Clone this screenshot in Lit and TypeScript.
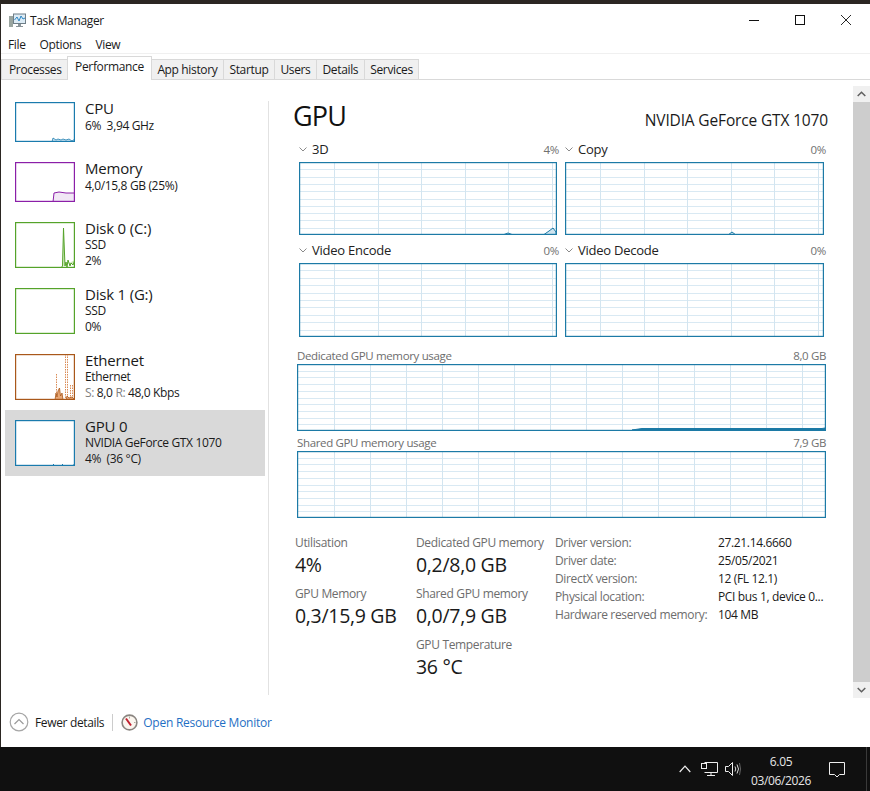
import { LitElement, html, css, svg } from "lit";
import { customElement, property } from "lit/decorators.js";

const FONT = css`"Open Sans", "Noto Sans", "Liberation Sans", sans-serif`;

// small preview in the left list
@customElement("perf-thumb")
class PerfThumb extends LitElement {
  @property() color = "#000";
  @property({ type: Number }) h = 40;
  @property() kind = "";

  static styles = css`
    :host { display: block; flex: none; }
    svg { display: block; }
  `;

  shape() {
    const h = this.h, c = this.color;
    if (this.kind === "cpu")
      return svg`<polygon points="37,${h} 38,${h - 4} 41,${h - 2} 43,${h - 3} 46,${h - 2} 48,${h - 3} 51,${h - 2} 54,${h - 3} 57,${h - 1} 60,${h - 3} 60,${h}" fill="#cfe6f3" stroke=${c} stroke-width=".8"/>`;
    if (this.kind === "mem")
      return svg`<polygon points="38,${h} 39,${h - 9} 44,${h - 10} 51,${h - 9} 60,${h - 9} 60,${h}" fill="#f1e7f5" stroke=${c} stroke-width="1"/>`;
    if (this.kind === "disk")
      return svg`<polyline points="44,${h} 46,${h} 47.5,${h - 2} 48.500,6 50,${h - 2} 51,${h - 6} 52,${h - 1} 53,${h - 8} 55,${h - 2} 56,${h - 5} 58,${h - 3} 60,${h - 8}" fill="#cfe8bd" stroke=${c} stroke-width="1"/>`;
    if (this.kind === "eth")
      return svg`
        <line x1="50.500" y1="0" x2="50.500" y2=${h} stroke="#d98b55" stroke-width="1" stroke-dasharray="1.500 1"/>
        <line x1="52.500" y1="0" x2="52.500" y2=${h} stroke="#d98b55" stroke-width="1" stroke-dasharray="1.500 1"/>
        <line x1="41.500" y1="20" x2="41.500" y2=${h} stroke="#d98b55" stroke-width="1" stroke-dasharray="1.500 1"/>
        <line x1="55.500" y1="31" x2="55.500" y2=${h} stroke="#d98b55" stroke-width="1" stroke-dasharray="1.500 1"/>
        <line x1="57.500" y1="31" x2="57.500" y2=${h} stroke="#d98b55" stroke-width="1" stroke-dasharray="1.500 1"/>
        <polygon points="40,${h} 41,${h - 7} 42,${h - 3} 43,${h - 9} 44.500,${h - 12} 45.500,${h - 4} 47,${h - 7} 48,${h}" fill="#e8a877" stroke=${c} stroke-width=".8"/>
        <polygon points="51,${h} 52,${h - 4} 54,${h - 2} 57,${h - 3} 60,${h}" fill="#e8a877" stroke=${c} stroke-width=".8"/>`;
    if (this.kind === "gpu")
      return svg`
        <rect x="38" y=${h - 2} width="1" height="1" fill=${c}/>
        <rect x="47" y=${h - 2} width="1" height="1" fill=${c}/>
        <polygon points="57,${h} 60,${h - 3} 60,${h}" fill=${c}/>`;
    return null;
  }

  render() {
    const h = this.h;
    return html`<svg width="60" height=${h} viewBox="0 0 60 ${h}">
      <rect width="60" height=${h} fill="#fff"/>
      ${this.shape()}
      <rect x=".6" y=".6" width="58.8" height=${h - 1.2} fill="none" stroke=${this.color} stroke-width="1.2"/>
    </svg>`;
  }
}

// big gpu graph with its grid
@customElement("usage-graph")
class UsageGraph extends LitElement {
  @property({ type: Number }) w = 258;
  @property({ type: Number }) h = 73;
  @property({ type: Number }) step = 43.6;
  @property({ type: Number }) offset = 35;
  @property() fill = "";
  @property() shade = "#cfe4ef";

  static styles = css`
    :host { display: block; }
    svg { display: block; }
  `;

  render() {
    const { w, h, step, offset } = this;
    const vs: number[] = [];
    for (let x = offset; x < w - 2; x += step) vs.push(Math.round(x) + 0.5);
    const hs: number[] = [];
    for (let i = 1; i < 10; i++) hs.push(Math.round((h * i) / 10) + 0.5);
    return html`<svg width=${w} height=${h} viewBox="0 0 ${w} ${h}">
      <rect width=${w} height=${h} fill="#fff"/>
      ${hs.map((y) => svg`<line x1="0" x2=${w} y1=${y} y2=${y} stroke="#d9e9f3"/>`)}
      ${vs.map((x) => svg`<line y1="0" y2=${h} x1=${x} x2=${x} stroke="#d3e5f0"/>`)}
      ${this.fill ? svg`<polygon points=${this.fill} fill=${this.shade} stroke="#1c7aa6" stroke-width="1"/>` : null}
      <rect x=".6" y=".6" width=${w - 1.2} height=${h - 1.2} fill="none" stroke="#1c7aa6" stroke-width="1.2"/>
    </svg>`;
  }
}

const ITEMS = [
  { name: "CPU", lines: [html`6%&nbsp; 3,94 GHz`], color: "#1a7bad", h: 40, kind: "cpu" },
  { name: "Memory", lines: [html`4,0/15,8 GB (25%)`], color: "#8b1fa8", h: 40, kind: "mem" },
  { name: "Disk 0 (C:)", lines: [html`SSD`, html`2%`], color: "#55a32a", h: 46, kind: "disk" },
  { name: "Disk 1 (G:)", lines: [html`SSD`, html`0%`], color: "#55a32a", h: 46, kind: "" },
  {
    name: "Ethernet",
    lines: [html`Ethernet`, html`<span class="dim">S:</span> 8,0 <span class="dim">R:</span> 48,0 Kbps`],
    color: "#a9581a",
    h: 46,
    kind: "eth",
  },
  { name: "GPU 0", lines: [html`NVIDIA GeForce GTX 1070`, html`4%&nbsp; (36 °C)`], color: "#1a7bad", h: 46, kind: "gpu", active: true },
];

const TABS = ["Processes", "Performance", "App history", "Startup", "Users", "Details", "Services"];

const DETAILS = [
  ["Driver version:", "27.21.14.6660"],
  ["Driver date:", "25/05/2021"],
  ["DirectX version:", "12 (FL 12.1)"],
  ["Physical location:", "PCI bus 1, device 0..."],
  ["Hardware reserved memory:", "104 MB"],
];

@customElement("app-root")
export class AppRoot extends LitElement {
  static styles = css`
    :host {
      display: flex;
      flex-direction: column;
      width: 870px;
      height: 791px;
      background: #101010;
      font-family: ${FONT};
      font-size: 12px;
      color: #1a1a1a;
      letter-spacing: -0.35px;
      overflow: hidden;
    }
    .wallpaper { height: 4px; background: #2b2622; flex: none; }
    .window {
      height: 743px;
      flex: none;
      display: flex;
      flex-direction: column;
      background: #fff;
      border-left: 1px solid #2b2622;
    }
    .titlebar { height: 32px; display: flex; align-items: center; flex: none; padding-right: 1px; }
    .app-icon { margin-left: 8px; margin-right: 4px; }
    .winbtn { width: 46px; height: 32px; display: flex; align-items: center; justify-content: center; }
    .spacer { flex: 1; }
    .menu {
      height: 17px;
      flex: none;
      display: flex;
      align-items: center;
      gap: 14px;
      padding-left: 7px;
      border-bottom: 1px solid #f0f0f0;
    }
    .tabs {
      height: 25px;
      flex: none;
      display: flex;
      align-items: flex-end;
      padding-left: 1px;
      border-bottom: 1px solid #d9d9d9;
    }
    .tab {
      height: 20px;
      line-height: 20px;
      padding: 0 5.5px;
      background: #f0f0f0;
      border: 1px solid #d9d9d9;
      border-bottom: 0;
      margin-left: -1px;
      box-sizing: border-box;
    }
    .tab:first-child { padding-left: 7px; }
    .tab.on {
      height: 24px;
      line-height: 20px;
      margin-bottom: -1px;
      background: #fff;
      position: relative;
      padding: 0 7px;
    }
    .content { flex: 1; min-height: 0; display: flex; }
    .side { width: 267px; flex: none; padding: 12px 0 0 4px; box-sizing: border-box; }
    .item { display: flex; gap: 10px; padding: 10px; width: 260px; box-sizing: border-box; }
    .item.on { background: #d9d9d9; }
    .text { margin: -2px 0; height: 0; }
    .item .name { font-size: 15px; line-height: 16px; margin-bottom: 1px; letter-spacing: -0.2px; }
    .item .sub { line-height: 16px; }
    .item .one { margin-top: 2px; }
    .dim { color: #808080; }
    .divider { width: 1px; background: #e2e2e2; margin: 21px 0 7px; flex: none; }
    .main { flex: 1; min-width: 0; padding-left: 24px; }
    .head {
      display: flex;
      align-items: baseline;
      justify-content: space-between;
      height: 40px;
      padding: 20px 25px 0 0;
    }
    h1 { margin: 0; font-size: 27px; font-weight: 400; line-height: 32px; color: #111; letter-spacing: -0.8px; }
    .adapter { font-size: 15.5px; letter-spacing: -0.15px; }
    .graphs {
      display: grid;
      grid-template-columns: 258px 259px;
      column-gap: 8px;
      row-gap: 6px;
      margin-left: 6px;
    }
    .cap { height: 18px; margin-bottom: 4px; display: flex; align-items: center; justify-content: space-between; }
    .cap .title { font-size: 13px; display: flex; align-items: center; gap: 5px; color: #222; letter-spacing: -0.25px; }
    .pct { color: #707070; margin-right: -2px; font-size: 11.5px; }
    .wide { margin: 10px 0 0 4px; width: 529px; }
    .wide + .wide { margin-top: 2px; }
    .wide .cap { height: 17px; margin: 0; color: #6d6d6d; font-size: 11.5px; }
    .wide + .wide .cap { height: 18px; }
    .wide .pct { margin: 0; }
    .stats {
      display: grid;
      grid-template-columns: 121px 139px 1fr;
      margin: 17px 0 0 2px;
    }
    .stat { height: 51px; }
    .stat .label { color: #6d6d6d; line-height: 16px; }
    .stat .value { font-size: 19.5px; line-height: 28px; color: #1a1a1a; letter-spacing: -0.3px; }
    .info { display: grid; grid-template-columns: 163px 1fr; grid-auto-rows: 18px; line-height: 18px; margin-top: -1px; align-content: start; }
    .info .k { color: #6d6d6d; }
    .scroll { width: 17px; flex: none; margin-top: 6px; display: flex; flex-direction: column; height: 612px; }
    .arrow { height: 16px; background: #f0f0f0; display: flex; align-items: center; justify-content: center; flex: none; }
    .thumb { flex: 1; background: #cdcdcd; }
    .footer { height: 45px; flex: none; display: flex; align-items: center; padding: 0 0 5px 8px; box-sizing: border-box; }
    .footer .less { margin-left: 6px; color: #1a1a1a; }
    .sep { width: 1px; height: 17px; background: #ccc; margin: 0 8px; }
    .link { color: #1f6fc4; margin-left: 5px; letter-spacing: -0.25px; }
    .taskbar { height: 44px; flex: none; display: flex; align-items: center; justify-content: flex-end; color: #e6e6e6; }
    .clock { width: 80px; text-align: center; line-height: 19px; padding-top: 3px; }
    .edge { width: 1px; height: 44px; background: #3a3a3a; margin: 0 3px 0 20px; }
  `;

  renderGraph(label: string, pct: string, fill = "", h = 73, w = 258) {
    return html`<div>
      <div class="cap">
        <span class="title">
          <svg width="8" height="5" viewBox="0 0 8 5"><path d="M.5.5 4 4 7.5.5" fill="none" stroke="#8a8a8a"/></svg>
          ${label}
        </span>
        <span class="pct">${pct}</span>
      </div>
      <usage-graph .w=${w} .h=${h} .fill=${fill}></usage-graph>
    </div>`;
  }

  renderStat(label: string, value: string) {
    return html`<div class="stat"><div class="label">${label}</div><div class="value">${value}</div></div>`;
  }

  render() {
    return html`
      <div class="wallpaper"></div>
      <div class="window">
        <div class="titlebar">
          <svg class="app-icon" width="17" height="15" viewBox="0 0 17 15">
            <rect x="0" y="3" width="4" height="11" fill="#9aa5a0"/>
            <rect x="4.500" y="1" width="12" height="9.500" fill="#dcebf5" stroke="#6f7f88"/>
            <path d="M5.500 7 8 4l2 4 2-5 2 3 2-1" fill="none" stroke="#2c86c4"/>
            <rect x="9" y="11" width="3" height="2" fill="#8a9398"/>
            <rect x="7" y="13" width="7" height="1" fill="#8a9398"/>
          </svg>
          <span>Task Manager</span>
          <span class="spacer"></span>
          <div class="winbtn"><svg width="10" height="10" viewBox="0 0 10 10"><path d="M0 5.500h10" stroke="#111"/></svg></div>
          <div class="winbtn"><svg width="10" height="10" viewBox="0 0 10 10"><rect x=".5" y=".5" width="9" height="9" fill="none" stroke="#111"/></svg></div>
          <div class="winbtn"><svg width="10" height="10" viewBox="0 0 10 10"><path d="M0 0l10 10M10 0 0 10" stroke="#111" stroke-width=".9"/></svg></div>
        </div>
        <div class="menu"><span>File</span><span>Options</span><span>View</span></div>
        <div class="tabs">
          ${TABS.map((t, i) => html`<div class="tab ${i === 1 ? "on" : ""}">${t}</div>`)}
        </div>
        <div class="content">
          <div class="side">
            ${ITEMS.map(
              (it) => html`<div class="item ${it.active ? "on" : ""}">
                <perf-thumb .color=${it.color} .h=${it.h} .kind=${it.kind}></perf-thumb>
                <div class="text">
                  <div class="name">${it.name}</div>
                  ${it.lines.map((l) => html`<div class="sub ${it.lines.length === 1 ? "one" : ""}">${l}</div>`)}
                </div>
              </div>`
            )}
          </div>
          <div class="divider"></div>
          <div class="main">
            <div class="head">
              <h1>GPU</h1>
              <span class="adapter">NVIDIA GeForce GTX 1070</span>
            </div>
            <div class="graphs">
              ${this.renderGraph("3D", "4%", "205,72.500 209,71 213,72.500 245,72.500 250,69 254,66 257,70 257,72.500")}
              ${this.renderGraph("Copy", "0%", "163,73 167,70 171,73", 73, 259)}
              ${this.renderGraph("Video Encode", "0%", "", 74)}
              ${this.renderGraph("Video Decode", "0%", "", 74, 259)}
            </div>
            <div class="wide">
              <div class="cap"><span>Dedicated GPU memory usage</span><span class="pct">8,0 GB</span></div>
              <usage-graph .w=${529} .h=${67} .step=${36} .offset=${36.5} .shade=${"#1c7aa6"} .fill=${"335,66 345,64.500 525,64.500 528,64 528,66"}></usage-graph>
            </div>
            <div class="wide">
              <div class="cap"><span>Shared GPU memory usage</span><span class="pct">7,9 GB</span></div>
              <usage-graph .w=${529} .h=${67} .step=${36} .offset=${36.5}></usage-graph>
            </div>
            <div class="stats">
              <div>
                ${this.renderStat("Utilisation", "4%")}
                ${this.renderStat("GPU Memory", "0,3/15,9 GB")}
              </div>
              <div>
                ${this.renderStat("Dedicated GPU memory", "0,2/8,0 GB")}
                ${this.renderStat("Shared GPU memory", "0,0/7,9 GB")}
                ${this.renderStat("GPU Temperature", "36 °C")}
              </div>
              <div class="info">
                ${DETAILS.map(([k, v]) => html`<span class="k">${k}</span><span>${v}</span>`)}
              </div>
            </div>
          </div>
          <div class="scroll">
            <div class="arrow"><svg width="9" height="6" viewBox="0 0 9 6"><path d="M.7 5 4.500 1.200 8.300 5" fill="none" stroke="#606060" stroke-width="1.500"/></svg></div>
            <div class="thumb"></div>
            <div class="arrow"><svg width="9" height="6" viewBox="0 0 9 6"><path d="M.7 1 4.500 4.800 8.300 1" fill="none" stroke="#606060" stroke-width="1.500"/></svg></div>
          </div>
        </div>
        <div class="footer">
          <svg width="20" height="20" viewBox="0 0 20 20">
            <circle cx="10" cy="10" r="8.800" fill="#fff" stroke="#a6a6a6" stroke-width="1.200"/>
            <path d="M5.500 12 10 7.500l4.500 4.500" fill="none" stroke="#9a9a9a" stroke-width="1.200"/>
          </svg>
          <span class="less">Fewer details</span>
          <span class="sep"></span>
          <svg width="17" height="17" viewBox="0 0 17 17">
            <circle cx="8.500" cy="8.500" r="7.400" fill="#fbf6ef" stroke="#8a8580" stroke-width="1.600"/>
            <path d="M5 4.500 10 11.500" stroke="#c22030" stroke-width="2"/>
            <path d="M8.500 2.500v2M13 8.500h1.500" stroke="#b0a89e"/>
          </svg>
          <span class="link">Open Resource Monitor</span>
        </div>
      </div>
      <div class="taskbar">
        <svg width="12" height="8" viewBox="0 0 12 8"><path d="M.7 7 6 1.200 11.300 7" fill="none" stroke="#eee" stroke-width="1.200"/></svg>
        <svg style="margin-left:10px" width="17" height="16" viewBox="0 0 17 16">
          <path d="M3.500 1.500h13v10h-13M10 11.500v3M6 14.500h8" fill="none" stroke="#eee"/>
          <rect x=".5" y="2.500" width="5" height="5" fill="#101010" stroke="#eee"/>
        </svg>
        <svg style="margin-left:7px" width="16" height="14" viewBox="0 0 16 14">
          <path d="M.5 4.500h3l4-4v13l-4-4h-3z" fill="none" stroke="#eee"/>
          <path d="M10 4.500q1.500 2.500 0 5M12 2.500q3 4.500 0 9" fill="none" stroke="#ddd"/>
          <path d="M14.500 1q2 6 0 12" fill="none" stroke="#666"/>
        </svg>
        <div class="clock"><div>6.05</div><div>03/06/2026</div></div>
        <svg style="margin-left:7px" width="18" height="17" viewBox="0 0 18 17">
          <path d="M1.500 1.500h15v12h-5l-2.500 2.500-2.500-2.500h-5z" fill="none" stroke="#eee"/>
        </svg>
        <span class="edge"></span>
      </div>
    `;
  }
}
